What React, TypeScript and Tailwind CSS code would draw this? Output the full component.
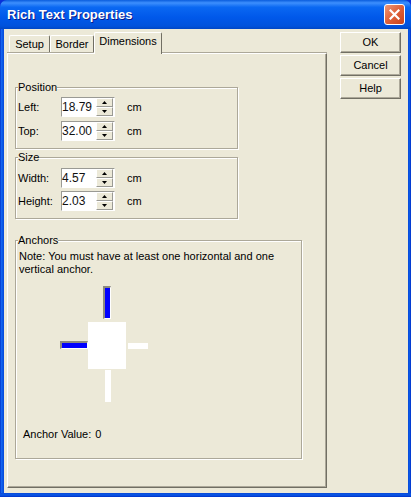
import React from 'react';

const FACE = 'bg-[#ECE9D8]';

const GroupBox: React.FC<{ title: string; className?: string; children: React.ReactNode }> = ({ title, className, children }) => (
  <div className={`relative border border-[#ACA899] shadow-[1px_1px_0_#fff,inset_1px_1px_0_#fff] ${className ?? ''}`}>
    <span className={`absolute -top-[7px] left-[2px] ${FACE} leading-[13px]`}>{title}</span>
    {children}
  </div>
);

const Arrow: React.FC<{ up?: boolean }> = ({ up }) => (
  <svg width="5" height="3" viewBox="0 0 5 3">
    {up ? <polygon points="2.5,0 5,3 0,3" fill="#000" /> : <polygon points="0,0 5,0 2.5,3" fill="#000" />}
  </svg>
);

const Spin: React.FC<{ label: string; value: string }> = ({ label, value }) => (
  <div className="flex items-center h-[20px]">
    <span className="w-[43px]">{label}</span>
    <div className="flex w-[54px] h-[20px] bg-white border border-t-[#9A9A94] border-l-[#9A9A94] border-r-[#fff] border-b-[#fff]">
      <span className="flex-1 text-[12px] leading-[19px] text-[#111]">{value}</span>
      <div className="flex flex-col w-[17px] mr-[1px]">
        {[true, false].map((up) => (
          <div
            key={String(up)}
            className={`flex-1 flex items-center justify-center ${FACE} border border-t-[#fff] border-l-[#fff] border-r-[#9A9A94] border-b-[#9A9A94]`}
          >
            <Arrow up={up} />
          </div>
        ))}
      </div>
    </div>
    <span className="ml-[12px]">cm</span>
  </div>
);

const Tab: React.FC<{ label: string; selected?: boolean; w: string }> = ({ label, selected, w }) => (
  <div
    className={`${w} ${FACE} flex justify-center border-t border-l border-t-white border-l-white border-r border-r-[#716F64] rounded-tl-[2px] rounded-tr-[2px] ${
      selected ? 'h-[22px] -mb-[1px] relative z-10 pt-[2px]' : 'h-[18px] pt-[2px]'
    }`}
  >
    {label}
  </div>
);

const Button: React.FC<{ label: string }> = ({ label }) => (
  <div className={`w-[61px] h-[21px] ${FACE} flex items-center justify-center border border-t-white border-l-white border-r-[#716F64] border-b-[#716F64] shadow-[inset_-1px_-1px_0_#ACA899]`}>
    {label}
  </div>
);

export default function App() {
  return (
    <div className="w-[411px] h-[497px] flex flex-col overflow-hidden bg-[#0831D9] font-['Liberation_Sans',Arial,sans-serif] text-[11px] leading-[13px] text-black">
      {/* title bar */}
      <div className="h-[29px] shrink-0 flex items-center pl-[7px] pr-[6px] rounded-t-[7px] bg-[linear-gradient(to_bottom,#0A5DDD_0%,#3D8FFD_10%,#0A68F2_25%,#0058EA_60%,#0052DC_90%,#0046C4_100%)]">
        <span className="text-white font-bold text-[13px] [text-shadow:1px_1px_0_#0A1A8A]">Rich Text Properties</span>
        <div className="ml-auto w-[21px] h-[21px] rounded-[3px] border border-white flex items-center justify-center bg-[linear-gradient(135deg,#EE9878_0%,#DE6038_50%,#C8421C_100%)]">
          <svg width="11" height="11" viewBox="0 0 11 11">
            <path d="M1.5 1.5 L9.5 9.5 M9.5 1.5 L1.5 9.5" stroke="#fff" strokeWidth="2.2" strokeLinecap="square" />
          </svg>
        </div>
      </div>

      <div className="flex flex-1">
        <div className="w-[4px] bg-[linear-gradient(to_right,#0030C8,#1766F0,#0A58E6,#0848D8)]" />
        <div className={`flex-1 ${FACE} flex pl-[3px] pt-[3px]`}>
          {/* left column: tabs + panel */}
          <div className="w-[320px] flex flex-col">
            <div className="h-[21px] flex items-end pl-[2px]">
              <Tab label="Setup" w="w-[41px]" />
              <Tab label="Border" w="w-[44px]" />
              <Tab label="Dimensions" w="w-[68px]" selected />
            </div>
            <div className="h-[435px] border border-t-[#FFFFFF] border-l-[#FFFFFF] border-r-[#716F64] border-b-[#716F64] shadow-[inset_-1px_-1px_0_#ACA899,0_-1px_0_#ACA899] pl-[7px] pt-[33px]">
              <GroupBox title="Position" className="w-[223px] h-[62px] pt-[9px] pl-[2px] flex flex-col gap-[4px]">
                <Spin label="Left:" value="18.79" />
                <Spin label="Top:" value="32.00" />
              </GroupBox>
              <GroupBox title="Size" className="mt-[8px] w-[223px] h-[62px] pt-[10px] pl-[2px] flex flex-col gap-[3px]">
                <Spin label="Width:" value="4.57" />
                <Spin label="Height:" value="2.03" />
              </GroupBox>
              <GroupBox title="Anchors" className="mt-[21px] w-[287px] h-[219px] pt-[9px] pl-[3px]">
                <p className="w-[275px]">Note: You must have at least one horizontal and one vertical anchor.</p>
                {/* anchor diagram */}
                <div className="relative ml-[41px] mt-[10px] w-[88px] h-[116px]">
                  <div className="absolute left-[43px] top-0 w-[8px] h-[33px] bg-[#0000FF] border-t-2 border-l-2 border-t-[#8C8A80] border-l-[#8C8A80] border-r border-b border-r-white border-b-white" />
                  <div className="absolute left-0 top-[55px] w-[28px] h-[8px] bg-[#0000FF] border-t-2 border-l-2 border-t-[#8C8A80] border-l-[#8C8A80] border-r border-b border-r-white border-b-white" />
                  <div className="absolute left-[28px] top-[36px] w-[38px] h-[47px] bg-white" />
                  <div className="absolute left-[68px] top-[57px] w-[20px] h-[6px] bg-white" />
                  <div className="absolute left-[45px] top-[84px] w-[6px] h-[32px] bg-white" />
                </div>
                <div className="ml-[4px] mt-[26px] flex">
                  <span>Anchor Value:</span>
                  <span className="ml-[4px]">0</span>
                </div>
              </GroupBox>
            </div>
          </div>
          {/* buttons */}
          <div className="ml-[13px] flex flex-col gap-[2px]">
            <Button label="OK" />
            <Button label="Cancel" />
            <Button label="Help" />
          </div>
        </div>
        <div className="w-[3px] bg-[linear-gradient(to_right,#0848D8,#0A58E6,#0030C8)]" />
      </div>
      <div className="h-[4px] shrink-0 bg-[linear-gradient(to_bottom,#0848D8,#0A58E6,#0030C8)]" />
    </div>
  );
}
